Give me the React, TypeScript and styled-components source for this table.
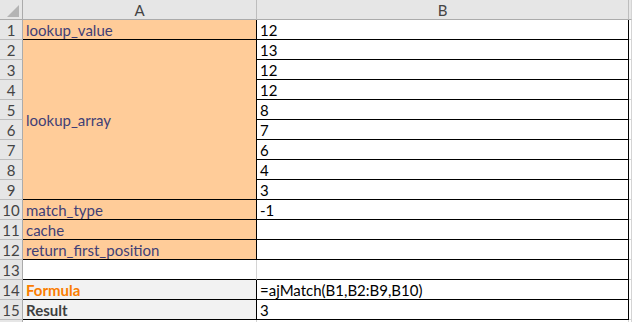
import styled, { createGlobalStyle } from "styled-components";

const GlobalStyle = createGlobalStyle`
  html, body {
    margin: 0;
    padding: 0;
    background: #ffffff;
  }
  body {
    font-family: Lato, "Liberation Sans", sans-serif;
  }
`;

const Sheet = styled.div`
  display: grid;
  grid-template-columns: 23px 234px 372px 3px;
  grid-auto-rows: 20px;
  width: 632px;
  height: 322px;
  overflow: hidden;
  background: #ffffff;
  font-size: 15px;
`;

const Corner = styled.div`
  position: relative;
  background: #e6e6e6;
  border-right: 1px solid #ababab;
  border-bottom: 1px solid #ababab;
  box-sizing: border-box;

  svg {
    position: absolute;
    left: 7px;
    top: 5px;
  }
`;

const ColHeader = styled.div<{ $last?: boolean }>`
  display: flex;
  align-items: center;
  justify-content: center;
  box-sizing: border-box;
  background: #e6e6e6;
  color: #444444;
  border-right: 1px solid ${(p) => (p.$last ? "#d4d4d4" : "#bdbdbd")};
  border-bottom: 1px solid #ababab;
  padding-top: 1px;
`;

const RowHeader = styled.div`
  display: flex;
  align-items: center;
  justify-content: center;
  box-sizing: border-box;
  background: #e6e6e6;
  color: #444444;
  border-right: 1px solid #ababab;
  border-bottom: 1px solid #bdbdbd;
  padding-top: 1px;
`;

type Tone = "input" | "calc" | "output" | "plain";

const fills: Record<Tone, string> = {
  input: "#ffcc99",
  calc: "#f2f2f2",
  output: "#f2f2f2",
  plain: "#ffffff",
};

const inks: Record<Tone, string> = {
  input: "#3f3f76",
  calc: "#fa7d00",
  output: "#3f3f3f",
  plain: "#000000",
};

const Cell = styled.div<{
  $tone: Tone;
  $span?: number;
  $right?: string;
  $bottom?: string;
}>`
  display: flex;
  align-items: center;
  box-sizing: border-box;
  padding: 1px 0 0 3px;
  background: ${(p) => fills[p.$tone]};
  color: ${(p) => inks[p.$tone]};
  font-weight: ${(p) => (p.$tone === "calc" || p.$tone === "output" ? 700 : 400)};
  border-right: 1px solid ${(p) => p.$right ?? "#000000"};
  border-bottom: 1px solid ${(p) => p.$bottom ?? "#000000"};
  grid-row: ${(p) => (p.$span ? `span ${p.$span}` : "auto")};
  white-space: nowrap;
`;

const Spare = styled.div`
  box-sizing: border-box;
  border-right: 1px solid #d4d4d4;
  border-bottom: 1px solid #d4d4d4;
`;

type Row = {
  n: number;
  label?: string;
  a?: { text: string; tone: Tone; span?: number; right?: string };
  b: { text: string; tone?: Tone; right?: string; bottom?: string };
};

const rows: Row[] = [
  { n: 1, a: { text: "lookup_value", tone: "input" }, b: { text: "12" } },
  { n: 2, a: { text: "lookup_array", tone: "input", span: 8 }, b: { text: "13" } },
  { n: 3, b: { text: "12" } },
  { n: 4, b: { text: "12" } },
  { n: 5, b: { text: "8" } },
  { n: 6, b: { text: "7" } },
  { n: 7, b: { text: "6" } },
  { n: 8, b: { text: "4" } },
  { n: 9, b: { text: "3" } },
  { n: 10, a: { text: "match_type", tone: "input" }, b: { text: "-1" } },
  { n: 11, a: { text: "cache", tone: "input" }, b: { text: "" } },
  { n: 12, a: { text: "return_first_position", tone: "input" }, b: { text: "" } },
  { n: 13, a: { text: "", tone: "plain", right: "#d4d4d4" }, b: { text: "" } },
  { n: 14, a: { text: "Formula", tone: "calc" }, b: { text: "=ajMatch(B1,B2:B9,B10)" } },
  { n: 15, a: { text: "Result", tone: "output" }, b: { text: "3" } },
  {
    n: 16,
    label: "",
    a: { text: "", tone: "plain", right: "#d4d4d4" },
    b: { text: "", right: "#d4d4d4", bottom: "#d4d4d4" },
  },
];

export default function App() {
  return (
    <>
      <GlobalStyle />
      <Sheet>
        <Corner>
          <svg width="12" height="12" viewBox="0 0 12 12">
            <polygon points="12,0 12,12 0,12" fill="#b4b4b4" />
          </svg>
        </Corner>
        <ColHeader>A</ColHeader>
        <ColHeader>B</ColHeader>
        <ColHeader $last />
        {rows.map((r) => [
          <RowHeader key={`h${r.n}`}>{r.label ?? r.n}</RowHeader>,
          r.a ? (
            <Cell
              key={`a${r.n}`}
              $tone={r.a.tone}
              $span={r.a.span}
              $right={r.a.right}
            >
              {r.a.text}
            </Cell>
          ) : null,
          <Cell
            key={`b${r.n}`}
            $tone={r.b.tone ?? "plain"}
            $right={r.b.right}
            $bottom={r.b.bottom}
          >
            {r.b.text}
          </Cell>,
          <Spare key={`c${r.n}`} />,
        ])}
      </Sheet>
    </>
  );
}
